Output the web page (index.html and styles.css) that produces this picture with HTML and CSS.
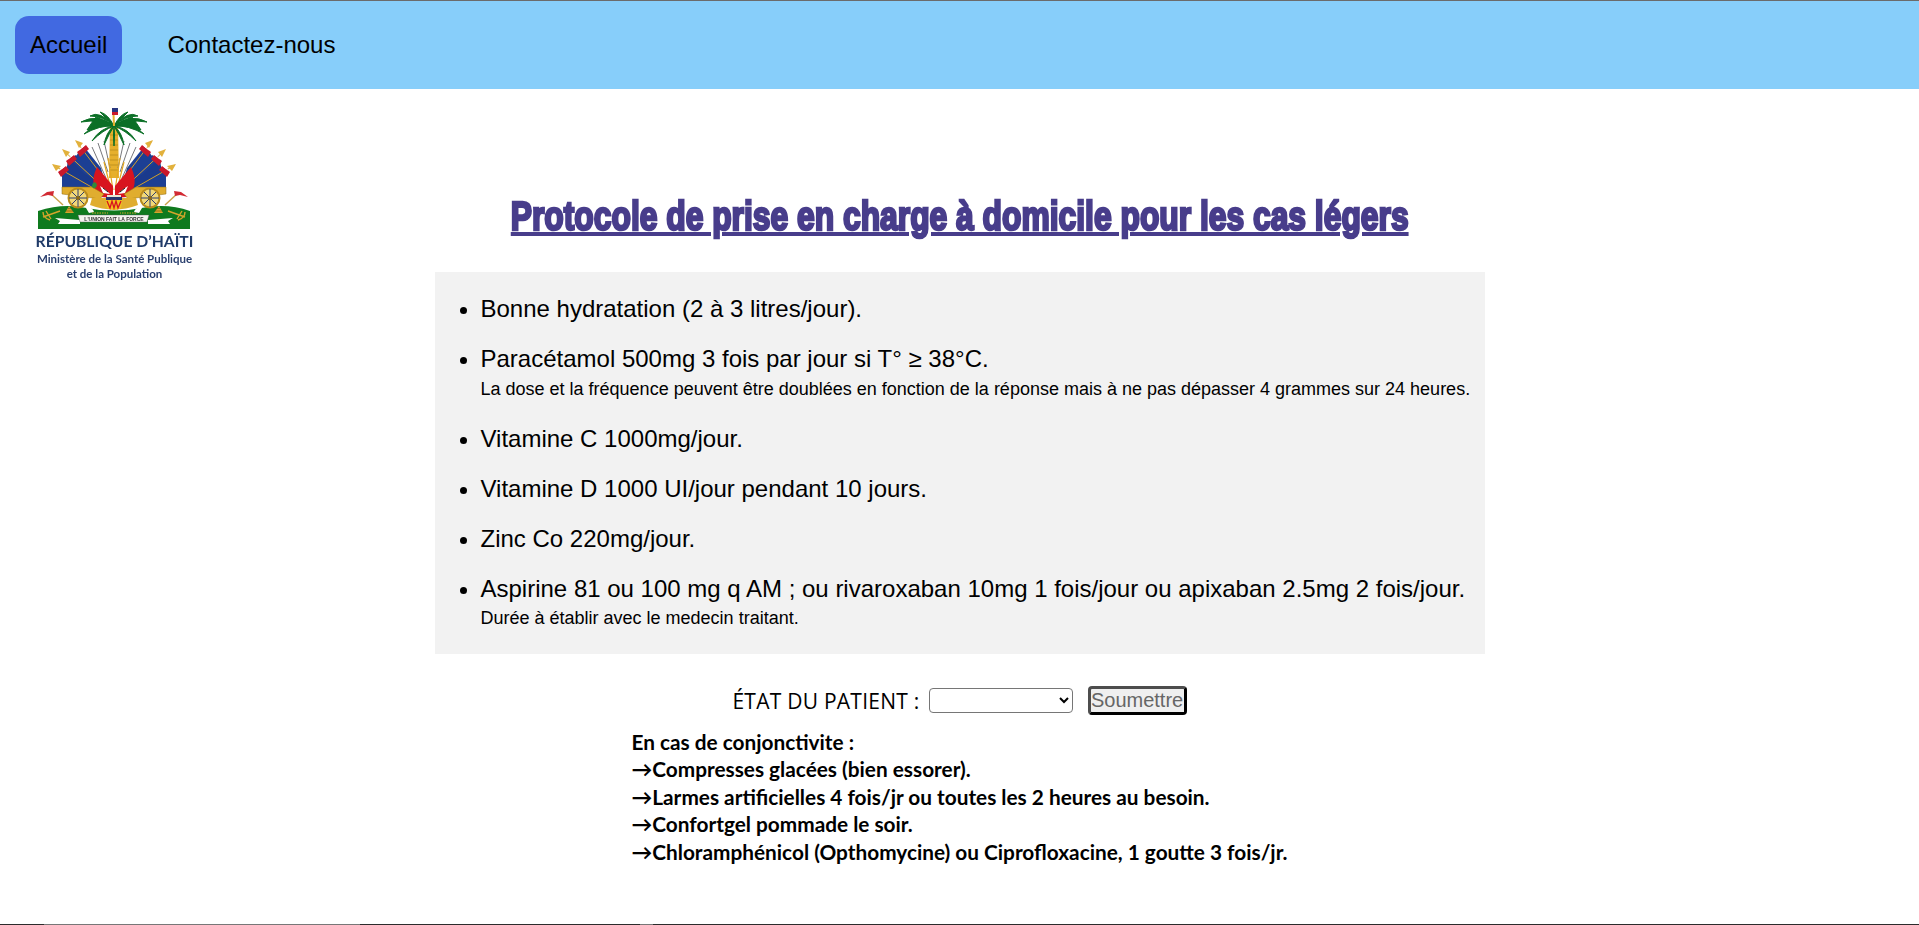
FILE: index.html
```html
<!DOCTYPE html>
<html lang="fr">
<head>
<meta charset="utf-8">
<title>Protocole de prise en charge</title>
<link rel="stylesheet" href="styles.css">
</head>
<body>
<nav class="nav">
  <a class="nav-link active" href="#">Accueil</a>
  <a class="nav-link" href="#">Contactez-nous</a>
</nav>
<main class="main">
  <header class="head">
  <svg class="logo" viewBox="30 100 175 190" width="175" height="190" role="img" aria-label="Armoiries">
    <defs>
      <g id="half">
        <!-- flags -->
        <path d="M62 173 L66 170 L92 186 L92 192 L62 189 Z" fill="#1c3f94"/>
        <path d="M68 160 L76 155 L98 178 L96 190 L66 173 Z" fill="#1a3a8c"/>
        <path d="M78 153 L85 148 L101 168 L106 186 L85 174 L73 162 Z" fill="#1c3f94"/>
        <!-- poles -->
        <path d="M76 141 L110 186 M63 150 L106 190 M53 165 L102 193" stroke="#d2a02a" stroke-width="1" fill="none"/>
        <path d="M75 140 L83 143 L79 148 Z M62 149 L70 152 L66 157 Z M52 164 L61 166 L56 171 Z" fill="#e2b13c"/>
        <!-- flag tips -->
        <path d="M77 152 L86 145 L89 149 L80 157 Z M66 161 L74 155 L77 159 L69 166 Z M58 172 L66 166 L69 170 L61 177 Z" fill="#c9182b"/>
        <path d="M79 150 L84 146 M68 159 L73 155 M60 170 L65 166" stroke="#fff" stroke-width="1"/>
        <!-- lances -->
        <path d="M92 147 L106 178 M98 143 L108 172 M104 141 L110 168" stroke="#77787c" stroke-width="1" fill="none"/>
        <path d="M104 162 L111 190 M108 158 L113 190" stroke="#e4a821" stroke-width="1.2" fill="none"/>
        <!-- red drape -->
        <path d="M97 167 Q103 174 113 186 L113 198 L101 197 Q88 186 97 167 Z" fill="#d8141f"/>
        <path d="M100 186 L106 190 L110 194 L103 193 Z" fill="#fff"/>
        <path d="M103 188 L108 192" stroke="#222" stroke-width="1"/>
        <!-- cannon -->
        <path d="M62 187 L92 187 L104 194 L100 199 L62 194 Z" fill="#e0ad2f" stroke="#8e6a12" stroke-width=".5"/>
        <circle cx="78" cy="198" r="9.500" fill="#f2d878" stroke="#b88a1c" stroke-width="2"/>
        <path d="M78 189 V207 M69 198 H87 M72 192 L84 204 M84 192 L72 204" stroke="#2d3d70" stroke-width="1"/>
        <circle cx="78" cy="198" r="2" fill="#8e6a12"/>
        <!-- small pennant -->
        <path d="M50 193 L63 205" stroke="#c9a24a" stroke-width="1.4"/>
        <path d="M40 197 L47 192 L54 191 L53 196 L48 195 Z" fill="#d22a33"/>
      </g>
      <g id="half-low">
        <path d="M43 217 L60 211 M46 211 L51 219 M43 212 Q43 218 50 220" stroke="#d6a52b" stroke-width="1.4" fill="none"/>
        <path d="M65 213 L69 206 L74 213 Z" fill="#d6a52b"/>
        <path d="M66 211 H73 M68 208.500 H71" stroke="#7b5b12" stroke-width=".7"/>
        <path d="M86 208 Q92 206 94 212 L89 213 Z" fill="#fff"/>
        <path d="M92 213 H108" stroke="#d6a52b" stroke-width="1.2" stroke-dasharray="1.5 1"/>
        <path d="M55 218 L80 220 L80 224 L58 224 L60 221 Z" fill="#fff"/>
      </g>
    </defs>
    <path d="M38 229 L38 211 Q60 204 80 207 Q114 214 148 207 Q170 204 190 211 L190 229 Z" fill="#0f7a1e"/>
    <use href="#half-low"/>
    <use href="#half-low" transform="translate(228,0) scale(-1,1)"/>
    <path d="M78 215 H149 L147 222 H80 Z" fill="#f5f5f0" stroke="#555" stroke-width=".4"/>
    <text class="logo-motto" x="114" y="221" text-anchor="middle">L'UNION FAIT LA FORCE</text>
    <path d="M110 125 H118 L119 178 H109 Z" fill="#e6b02c"/>
    <path d="M110 135 H118 M110 140 H118 M110 145 H118 M110 150 H118 M110 155 H118 M109.500 160 H118.500 M109.500 165 H118.500 M109.500 170 H118.500" stroke="#a87f1a" stroke-width=".6"/>
    <use href="#half"/>
    <use href="#half" transform="translate(228,0) scale(-1,1)"/>
    <g fill="#0b6f26" stroke="#0b6f26" stroke-width="1">
      <path d="M114 126 Q100 110 90 116 Q103 116 114 126 Z"/>
      <path d="M114 126 Q97 113 81 122 Q100 119 114 126 Z"/>
      <path d="M114 126 Q96 122 84 134 Q100 125 114 126 Z"/>
      <path d="M114 126 Q100 128 92 141 Q103 130 114 126 Z"/>
      <path d="M114 126 Q106 132 104 145 Q109 134 114 126 Z"/>
      <path d="M114 126 Q108 114 100 112 Q106 118 114 126 Z"/>
      <path d="M114 126 Q128 110 138 116 Q125 116 114 126 Z"/>
      <path d="M114 126 Q131 113 147 122 Q128 119 114 126 Z"/>
      <path d="M114 126 Q132 122 144 134 Q128 125 114 126 Z"/>
      <path d="M114 126 Q128 128 136 141 Q125 130 114 126 Z"/>
      <path d="M114 126 Q122 132 124 145 Q119 134 114 126 Z"/>
      <path d="M114 126 Q120 114 128 112 Q122 118 114 126 Z"/>
      <path d="M114 126 Q113 134 114 146 Q115 134 114 126 Z"/>
      <path d="M96 117 Q105 120 114 126 L102 126 L94 128 L87 130 Q92 122 96 117 Z"/>
      <path d="M132 117 Q123 120 114 126 L126 126 L134 128 L141 130 Q136 122 132 117 Z"/>
    </g>
    <path d="M113.500 114 L114 126" stroke="#e6b02c" stroke-width="2"/>
    <rect x="112" y="108" width="6" height="4" fill="#28367e"/>
    <rect x="112" y="112" width="6" height="3" fill="#c9182b"/>
    <path d="M90 205 Q114 214 138 205 L136 198 L92 198 Z" fill="#e0ad2f"/>
    <rect x="107" y="195" width="14" height="3" fill="#e8e4d2"/>
    <rect x="106" y="197" width="16" height="3" fill="#26356f"/>
    <path d="M106 200 H122 L121 208 Q114 212 107 208 Z" fill="#f2c21f"/>
    <path d="M107 201 L110 208 L112 201 L114 208 L116 201 L118 208 L121 201" stroke="#d8141f" stroke-width="1.3" fill="none"/>
    <path d="M93 183 Q96 181 97 185 Q96 189 93 188 Q91 186 93 183 Z" fill="#2f8a3a"/>
    <text class="logo-title" x="114.500" y="247" text-anchor="middle">RÉPUBLIQUE D’HAÏTI</text>
    <text class="logo-sub" x="114.500" y="263" text-anchor="middle">Ministère de la Santé Publique</text>
    <text class="logo-sub" x="114.500" y="278" text-anchor="middle">et de la Population</text>
  </svg>
  <h1 class="title"><span class="title-text">Protocole de prise en charge à domicile pour les cas légers</span></h1>
  </header>
  <ul class="panel">
    <li>Bonne hydratation (2 à 3 litres/jour).</li>
    <li>Paracétamol 500mg 3 fois par jour si T° ≥ 38°C.<small>La dose et la fréquence peuvent être doublées en fonction de la réponse mais à ne pas dépasser 4 grammes sur 24 heures.</small></li>
    <li>Vitamine C 1000mg/jour.</li>
    <li>Vitamine D 1000 UI/jour pendant 10 jours.</li>
    <li>Zinc Co 220mg/jour.</li>
    <li>Aspirine 81 ou 100 mg q AM ; ou rivaroxaban 10mg 1 fois/jour ou apixaban 2.5mg 2 fois/jour.<small>Durée à établir avec le medecin traitant.</small></li>
  </ul>
  <form class="form">
    <label class="form-label" for="etat">ÉTAT DU PATIENT :</label>
    <select class="form-select" id="etat"><option></option></select>
    <button class="form-btn" type="button">Soumettre</button>
  </form>
  <div class="note">
    <p>En cas de conjonctivite :</p>
    <p>→Compresses glacées (bien essorer).</p>
    <p>→Larmes artificielles 4 fois/jr ou toutes les 2 heures au besoin.</p>
    <p>→Confortgel pommade le soir.</p>
    <p>→Chloramphénicol (Opthomycine) ou Ciprofloxacine, 1 goutte 3 fois/jr.</p>
  </div>
</main>
<div class="edge"></div>
</body>
</html>
```
FILE: styles.css
```css
* { box-sizing: border-box; }
html, body { height: 100%; }
body {
  margin: 0;
  display: flex;
  flex-direction: column;
  overflow: hidden;
  background: #fff;
  color: #000;
  font-family: "Liberation Sans", Arial, sans-serif;
  border-top: 1px solid #6b6b6b;
}
.nav {
  height: 88px;
  flex: none;
  display: flex;
  align-items: flex-start;
  gap: 30px;
  padding: 15px 0 0 15px;
  background: #87cefa;
}
.nav-link {
  height: 58px;
  padding: 0 15px;
  display: flex;
  align-items: center;
  border-radius: 14px;
  font-size: 24px;
  color: #000;
  text-decoration: none;
}
.active { background: #4169e1; }
.main { flex: 1; min-height: 0; }
.head {
  display: grid;
  height: 183px;
}
.logo {
  grid-area: 1 / 1;
  justify-self: start;
  margin: 11px 0 0 30px;
  filter: blur(.35px);
}
.logo-title { font: 700 15.700px "Lato", sans-serif; fill: #1f3a68; }
.logo-sub { font: 700 11.500px "Lato", sans-serif; fill: #2a3f6e; }
.logo-motto { font: 700 5px "Liberation Sans", sans-serif; fill: #333; }
.title {
  grid-area: 1 / 1;
  margin: 0;
  padding-top: 104px;
  text-align: center;
  font-size: 40px;
  line-height: 46px;
  font-weight: 700;
  color: #483d8b;
}
.title-text {
  display: inline-block;
  white-space: nowrap;
  text-decoration: underline;
  -webkit-text-stroke: 2.6px #483d8b;
  transform: scaleX(.795);
}
.panel {
  width: 1050px;
  height: 382px;
  margin: 0 auto;
  padding: 23px 0 0 46px;
  list-style: disc;
  background: #f2f2f2;
  font-size: 24px;
}
.panel li { margin-bottom: 22.500px; line-height: 27.500px; }
.panel small { display: block; font-size: 18px; line-height: 21px; margin-top: 6px; padding-bottom: 2.500px; }
.form {
  margin-top: 32px;
  height: 29px;
  display: flex;
  justify-content: center;
  align-items: center;
}
.form-label { font-family: "Open Sans", sans-serif; font-size: 21px; letter-spacing: .25px; margin-right: 9px; }
.form-select {
  width: 144px;
  height: 25px;
  margin-right: 15px;
  background: #fff;
  border: 1px solid #767676;
  border-radius: 4px;
}
.form-btn {
  width: 99px;
  height: 29px;
  padding: 0;
  background: #efefef;
  border: 3px solid #000;
  border-top-color: #4d4d4d;
  border-left-color: #4d4d4d;
  border-radius: 4px;
  font-family: "Liberation Sans", sans-serif;
  font-size: 20px;
  color: #666;
}
.note {
  width: fit-content;
  margin: 13px auto 0;
  font-family: "Lato", sans-serif;
  font-weight: 700;
  font-size: 20.800px;
  line-height: 27.400px;
}
.note p { margin: 0; }
.edge {
  height: 1px;
  flex: none;
  background: linear-gradient(90deg, #2c2c2c 0 44px, #777 44px 360px, #2c2c2c 360px 640px, #777 640px 653px, #2c2c2c 653px);
}
```
